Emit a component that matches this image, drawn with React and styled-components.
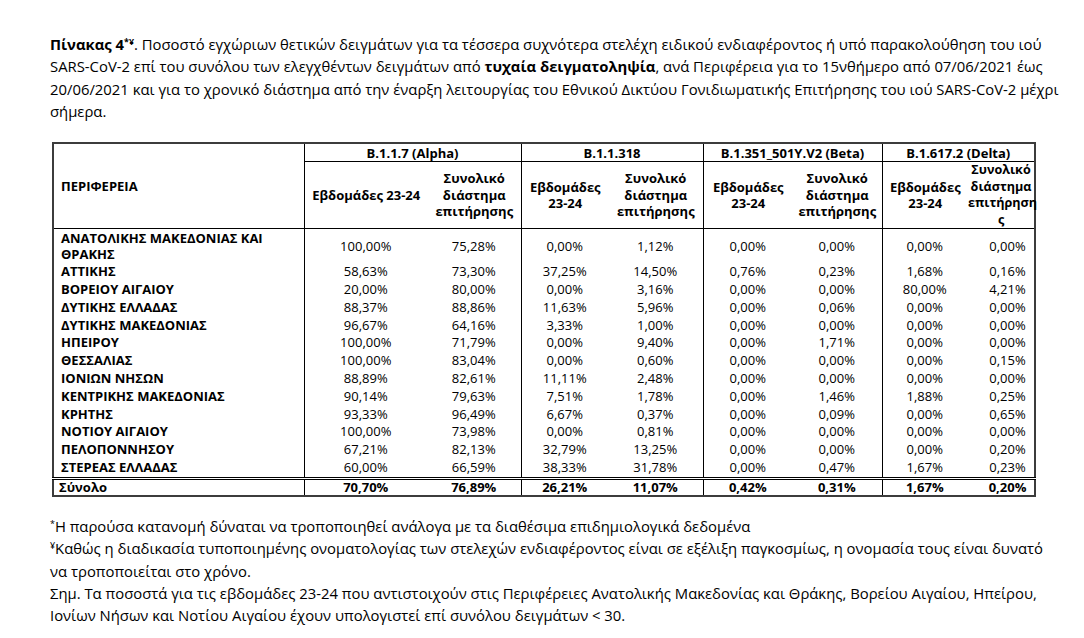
import React from "react";
import styled, { createGlobalStyle } from "styled-components";

const GlobalStyle = createGlobalStyle`
  body {
    margin: 0;
    background: #fff;
    color: #000;
    font-family: "Open Sans", "Noto Sans", sans-serif;
  }
`;

const Page = styled.div`
  padding: 33px 0 0 50px;
  width: 1034px;
`;

const Para = styled.div`
  font-size: 14.85px;
  line-height: 22.3px;
`;

const Line = styled.div`
  white-space: nowrap;
`;

const Sup = styled.sup`
  font-size: 0.6em;
  line-height: 0;
  vertical-align: 0.6em;
`;

const Table = styled.table`
  margin: 20px 0 0 2px;
  border-collapse: collapse;
  table-layout: fixed;
  width: 982px;
  border: 2px solid #3c3c3c;
  font-size: 13px;
`;

const GroupHead = styled.th`
  border-left: 1px solid #000;
  border-bottom: 1px solid #000;
  height: 17px;
  padding: 0;
  line-height: 16px;
  font-weight: 700;
  text-align: center;
  white-space: nowrap;
`;

const RegionHead = styled.th`
  border-bottom: 1px solid #000;
  padding: 0 0 0 7px;
  text-align: left;
  font-weight: 700;
  vertical-align: middle;
`;

const SubHead = styled.th`
  border-left: ${(p) => (p.$start ? "1px solid #000" : "none")};
  border-bottom: 1px solid #000;
  height: 66px;
  padding: 0;
  line-height: 16.5px;
  font-weight: 700;
  font-size: ${(p) => (p.$last ? "12.6px" : "13px")};
  text-align: center;
  vertical-align: middle;
  white-space: nowrap;
`;

const Row = styled.tr`
  font-weight: ${(p) => (p.$total ? 700 : 400)};
  & > td {
    border-top: ${(p) => (p.$total ? "3px double #000" : "none")};
    line-height: ${(p) => (p.$tall ? "16px" : p.$total ? "14px" : "17.8px")};
    padding-top: ${(p) => (p.$tall ? "1px" : "0")};
    padding-bottom: ${(p) => (p.$tall ? "1px" : p.$total ? "1px" : "0")};
  }
`;

const Region = styled.td`
  padding-left: ${(p) => (p.$total ? "5px" : "7px")};
  font-weight: 700;
  text-align: left;
  white-space: nowrap;
`;

const Value = styled.td`
  border-left: ${(p) => (p.$start ? "1px solid #000" : "none")};
  padding-left: ${(p) => (p.$last ? "14px" : "0")};
  text-align: center;
  white-space: nowrap;
`;

const Notes = styled.div`
  margin-top: 18px;
  font-size: 14.85px;
  line-height: 22.4px;
`;

const widths = [251, 124, 93, 88, 94, 90, 89, 86, 67];

const groups = [
  "B.1.1.7  (Alpha)",
  "B.1.1.318",
  "B.1.351_501Y.V2 (Beta)",
  "B.1.617.2 (Delta)",
];

const rows = [
  [["ΑΝΑΤΟΛΙΚΗΣ ΜΑΚΕΔΟΝΙΑΣ ΚΑΙ", "ΘΡΑΚΗΣ"], "100,00%", "75,28%", "0,00%", "1,12%", "0,00%", "0,00%", "0,00%", "0,00%"],
  ["ΑΤΤΙΚΗΣ", "58,63%", "73,30%", "37,25%", "14,50%", "0,76%", "0,23%", "1,68%", "0,16%"],
  ["ΒΟΡΕΙΟΥ ΑΙΓΑΙΟΥ", "20,00%", "80,00%", "0,00%", "3,16%", "0,00%", "0,00%", "80,00%", "4,21%"],
  ["ΔΥΤΙΚΗΣ ΕΛΛΑΔΑΣ", "88,37%", "88,86%", "11,63%", "5,96%", "0,00%", "0,06%", "0,00%", "0,00%"],
  ["ΔΥΤΙΚΗΣ ΜΑΚΕΔΟΝΙΑΣ", "96,67%", "64,16%", "3,33%", "1,00%", "0,00%", "0,00%", "0,00%", "0,00%"],
  ["ΗΠΕΙΡΟΥ", "100,00%", "71,79%", "0,00%", "9,40%", "0,00%", "1,71%", "0,00%", "0,00%"],
  ["ΘΕΣΣΑΛΙΑΣ", "100,00%", "83,04%", "0,00%", "0,60%", "0,00%", "0,00%", "0,00%", "0,15%"],
  ["ΙΟΝΙΩΝ ΝΗΣΩΝ", "88,89%", "82,61%", "11,11%", "2,48%", "0,00%", "0,00%", "0,00%", "0,00%"],
  ["ΚΕΝΤΡΙΚΗΣ ΜΑΚΕΔΟΝΙΑΣ", "90,14%", "79,63%", "7,51%", "1,78%", "0,00%", "1,46%", "1,88%", "0,25%"],
  ["ΚΡΗΤΗΣ", "93,33%", "96,49%", "6,67%", "0,37%", "0,00%", "0,09%", "0,00%", "0,65%"],
  ["ΝΟΤΙΟΥ ΑΙΓΑΙΟΥ", "100,00%", "73,98%", "0,00%", "0,81%", "0,00%", "0,00%", "0,00%", "0,00%"],
  ["ΠΕΛΟΠΟΝΝΗΣΟΥ", "67,21%", "82,13%", "32,79%", "13,25%", "0,00%", "0,00%", "0,00%", "0,20%"],
  ["ΣΤΕΡΕΑΣ ΕΛΛΑΔΑΣ", "60,00%", "66,59%", "38,33%", "31,78%", "0,00%", "0,47%", "1,67%", "0,23%"],
];

const total = ["Σύνολο", "70,70%", "76,89%", "26,21%", "11,07%", "0,42%", "0,31%", "1,67%", "0,20%"];

const ValueCells = ({ values }) =>
  values.map((v, i) => (
    <Value key={i} $start={i % 2 === 0} $last={i === 7}>
      {v}
    </Value>
  ));

export default function App() {
  return (
    <Page>
      <GlobalStyle />
      <Para>
        <Line>
          <b>
            Πίνακας 4<Sup>*¥</Sup>
          </b>
          . Ποσοστό εγχώριων θετικών δειγμάτων για τα τέσσερα συχνότερα στελέχη ειδικού ενδιαφέροντος ή υπό παρακολούθηση του ιού
        </Line>
        <Line>
          SARS-CoV-2 επί του συνόλου των ελεγχθέντων δειγμάτων από <b>τυχαία δειγματοληψία</b>, ανά Περιφέρεια για το 15νθήμερο από 07/06/2021 έως
        </Line>
        <Line>
          20/06/2021 και για το χρονικό διάστημα από την έναρξη λειτουργίας του Εθνικού Δικτύου Γονιδιωματικής Επιτήρησης του ιού SARS-CoV-2 μέχρι
        </Line>
        <Line>σήμερα.</Line>
      </Para>

      <Table>
        <colgroup>
          {widths.map((w, i) => (
            <col key={i} style={{ width: w }} />
          ))}
        </colgroup>
        <thead>
          <tr>
            <RegionHead rowSpan={2}>ΠΕΡΙΦΕΡΕΙΑ</RegionHead>
            {groups.map((g) => (
              <GroupHead key={g} colSpan={2}>
                {g}
              </GroupHead>
            ))}
          </tr>
          <tr>
            <SubHead $start>Εβδομάδες 23-24</SubHead>
            <SubHead>
              Συνολικό
              <br />
              διάστημα
              <br />
              επιτήρησης
            </SubHead>
            {[0, 1].map((k) => (
              <React.Fragment key={k}>
                <SubHead $start>
                  Εβδομάδες
                  <br />
                  23-24
                </SubHead>
                <SubHead>
                  Συνολικό
                  <br />
                  διάστημα
                  <br />
                  επιτήρησης
                </SubHead>
              </React.Fragment>
            ))}
            <SubHead $start>
              Εβδομάδες
              <br />
              23-24
            </SubHead>
            <SubHead $last>
              Συνολικό
              <br />
              διάστημα
              <br />
              επιτήρηση
              <br />ς
            </SubHead>
          </tr>
        </thead>
        <tbody>
          {rows.map(([name, ...values], i) => (
            <Row key={i} $tall={Array.isArray(name)}>
              <Region>
                {Array.isArray(name) ? (
                  <>
                    {name[0]}
                    <br />
                    {name[1]}
                  </>
                ) : (
                  name
                )}
              </Region>
              <ValueCells values={values} />
            </Row>
          ))}
          <Row $total>
            <Region $total>{total[0]}</Region>
            <ValueCells values={total.slice(1)} />
          </Row>
        </tbody>
      </Table>

      <Notes>
        <Line>
          <Sup>*</Sup>Η παρούσα κατανομή δύναται να τροποποιηθεί ανάλογα με τα διαθέσιμα επιδημιολογικά δεδομένα
        </Line>
        <Line>
          <Sup>¥</Sup>Καθώς η διαδικασία τυποποιημένης ονοματολογίας των στελεχών ενδιαφέροντος είναι σε εξέλιξη παγκοσμίως, η ονομασία τους είναι δυνατό
        </Line>
        <Line>να τροποποιείται στο χρόνο.</Line>
        <Line>
          Σημ. Τα ποσοστά για τις εβδομάδες 23-24 που αντιστοιχούν στις Περιφέρειες Ανατολικής Μακεδονίας και Θράκης, Βορείου Αιγαίου, Ηπείρου,
        </Line>
        <Line>Ιονίων Νήσων και Νοτίου Αιγαίου έχουν υπολογιστεί επί συνόλου δειγμάτων &lt; 30.</Line>
      </Notes>
    </Page>
  );
}
